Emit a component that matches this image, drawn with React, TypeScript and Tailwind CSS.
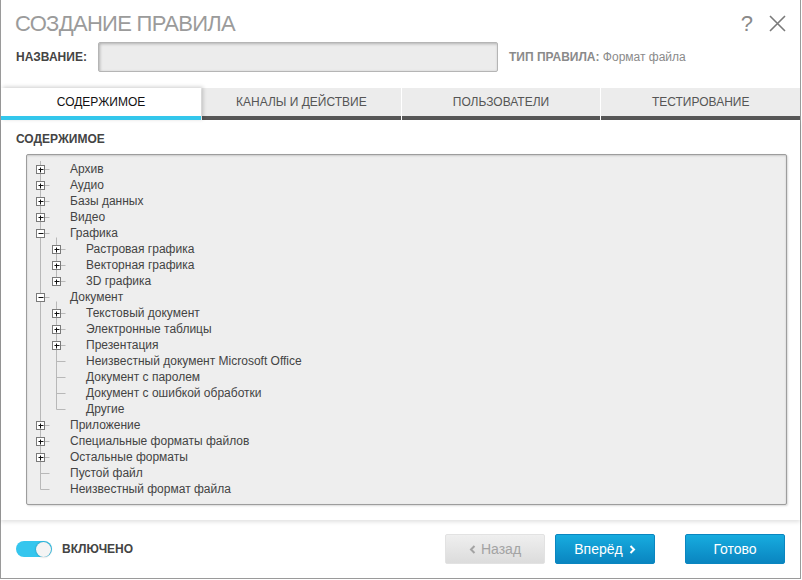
import React from "react";

type Node = { label: string; children?: Node[]; collapsed?: boolean };

const TREE: Node[] = [
  { label: "Архив", collapsed: true },
  { label: "Аудио", collapsed: true },
  { label: "Базы данных", collapsed: true },
  { label: "Видео", collapsed: true },
  {
    label: "Графика",
    children: [
      { label: "Растровая графика", collapsed: true },
      { label: "Векторная графика", collapsed: true },
      { label: "3D графика", collapsed: true },
    ],
  },
  {
    label: "Документ",
    children: [
      { label: "Текстовый документ", collapsed: true },
      { label: "Электронные таблицы", collapsed: true },
      { label: "Презентация", collapsed: true },
      { label: "Неизвестный документ Microsoft Office" },
      { label: "Документ с паролем" },
      { label: "Документ с ошибкой обработки" },
      { label: "Другие" },
    ],
  },
  { label: "Приложение", collapsed: true },
  { label: "Специальные форматы файлов", collapsed: true },
  { label: "Остальные форматы", collapsed: true },
  { label: "Пустой файл" },
  { label: "Неизвестный формат файла" },
];

type Row = {
  label: string;
  level: number;
  last: boolean;
  box: "plus" | "minus" | null;
  // for each ancestor level: does its line continue
  trail: boolean[];
};

function flatten(nodes: Node[], level: number, trail: boolean[], out: Row[]) {
  nodes.forEach((n, i) => {
    const last = i === nodes.length - 1;
    const box = n.collapsed ? "plus" : n.children ? "minus" : null;
    out.push({ label: n.label, level, last, box, trail });
    if (n.children) flatten(n.children, level + 1, [...trail, !last], out);
  });
  return out;
}

const ROWS = flatten(TREE, 0, [], []);
const LINE = "#b8b8b8";

function Gutter({ row }: { row: Row }) {
  const w = 43 + row.level * 16;
  const cx = 13.5 + row.level * 16;
  const cy = 8.5;
  return (
    <svg width={w} height={16} className="shrink-0">
      {row.trail.map((cont, a) =>
        cont ? <line key={a} x1={13.5 + a * 16} y1={0} x2={13.5 + a * 16} y2={16} stroke={LINE} /> : null
      )}
      <line x1={cx} y1={0} x2={cx} y2={row.last ? cy : 16} stroke={LINE} />
      <line x1={cx} y1={cy} x2={cx + 9} y2={cy} stroke={LINE} />
      {row.box === "minus" && <line x1={cx + 16} y1={cy + 4} x2={cx + 16} y2={16} stroke={LINE} />}
      {row.box && (
        <g>
          <rect x={cx - 4} y={cy - 4} width={8} height={8} fill="#fff" stroke="#7a7a7a" />
          <line x1={cx - 2} y1={cy} x2={cx + 3} y2={cy} stroke="#111" />
          {row.box === "plus" && <line x1={cx} y1={cy - 2} x2={cx} y2={cy + 3} stroke="#111" />}
        </g>
      )}
    </svg>
  );
}

const TABS = ["СОДЕРЖИМОЕ", "КАНАЛЫ И ДЕЙСТВИЕ", "ПОЛЬЗОВАТЕЛИ", "ТЕСТИРОВАНИЕ"];

export default function App() {
  return (
    <div className="w-[802px] h-[580px] bg-white overflow-hidden font-['Liberation_Sans',Arial,sans-serif]">
      <div className="w-[801px] h-[579px] flex flex-col border-l border-r border-b border-[#9a9a9a] bg-white">
        {/* Header */}
        <div className="flex items-center justify-between h-[42px] pl-[14px] pr-[14px] pt-[5px]">
          <h1 className="text-[22px] leading-[26px] text-[#9b9b9b] tracking-[-0.7px]">СОЗДАНИЕ ПРАВИЛА</h1>
          <div className="flex items-center gap-[16px]">
            <span className="text-[22px] leading-[24px] text-[#8a8a8a] font-light">?</span>
            <svg width="17" height="17" viewBox="0 0 17 17">
              <path d="M1 1L16 16M16 1L1 16" stroke="#7a7a7a" strokeWidth="1.6" />
            </svg>
          </div>
        </div>

        <div className="flex items-center h-[30px] pl-[15px]">
          <span className="w-[82px] text-[12px] font-bold text-[#444]">НАЗВАНИЕ:</span>
          <div className="w-[400px] h-[30px] bg-[#ececec] border border-[#b5b5b5] rounded-[2px] shadow-[inset_1px_1px_3px_rgba(0,0,0,0.25)]" />
          <span className="ml-[11px] text-[12px] text-[#8a8a8a]">
            <b>ТИП ПРАВИЛА:</b> Формат файла
          </span>
        </div>

        {/* Tabs */}
        <div className="flex gap-[1px] mt-[16px] h-[32px]">
          {TABS.map((t, i) =>
            i === 0 ? (
              <div
                key={t}
                className="relative z-10 w-[200px] flex items-center justify-center bg-white border-b-4 border-[#33c7ec] text-[12px] text-[#111] shadow-[2px_-1px_4px_rgba(0,0,0,0.2)]"
              >
                {t}
              </div>
            ) : (
              <div
                key={t}
                className="flex-1 flex items-center justify-center bg-[#ececec] border-b-4 border-[#575757] text-[12px] text-[#555]"
              >
                {t}
              </div>
            )
          )}
        </div>

        {/* Body */}
        <div className="flex flex-col h-[400px] pl-[15px] pr-[13px] pt-[11px] shadow-[0_2px_4px_rgba(0,0,0,0.12)] relative">
          <div className="text-[12px] leading-[16px] font-bold text-[#444]">СОДЕРЖИМОЕ</div>
          <div className="ml-[10px] mt-[7px] h-[351px] bg-[#eeeeee] border border-[#9d9d9d] rounded-[2px] shadow-[inset_0_1px_2px_rgba(0,0,0,0.15),1px_1px_2px_rgba(0,0,0,0.15)] pt-[6px]">
            {ROWS.map((r, i) => (
              <div key={i} className="flex h-[16px] items-center">
                <Gutter row={r} />
                <span className="text-[12px] leading-[16px] text-[#444] whitespace-nowrap">{r.label}</span>
              </div>
            ))}
          </div>
        </div>

        {/* Footer */}
        <div className="flex-1 flex items-center pl-[15px] pr-[15px]">
          <div className="flex items-center gap-[10px]">
            <div className="w-[36px] h-[16px] rounded-full bg-[#35c6ee] flex items-center justify-end pr-[1px]">
              <div className="w-[15px] h-[15px] rounded-full bg-[#f4f4f4] shadow-[0_0_2px_rgba(0,0,0,0.35)]" />
            </div>
            <span className="text-[12px] font-bold text-[#444]">ВКЛЮЧЕНО</span>
          </div>
          <div className="ml-auto flex items-center">
            <button className="w-[100px] h-[30px] flex items-center justify-center gap-[5px] rounded-[2px] bg-gradient-to-b from-[#efefef] to-[#dcdcdc] border border-[#e2e2e2] text-[14px] text-[#a3a3a3]">
              <svg width="7" height="9" viewBox="0 0 7 9">
                <path d="M5.5 1L2 4.5L5.5 8" stroke="#a3a3a3" strokeWidth="2" fill="none" />
              </svg>
              Назад
            </button>
            <button className="ml-[10px] w-[100px] h-[30px] flex items-center justify-center gap-[6px] rounded-[2px] bg-gradient-to-b from-[#17acdf] to-[#0a85c0] border border-[#0a86c0] text-[14px] text-white">
              Вперёд
              <svg width="7" height="9" viewBox="0 0 7 9">
                <path d="M1.5 1L5 4.5L1.5 8" stroke="#fff" strokeWidth="2" fill="none" />
              </svg>
            </button>
            <button className="ml-[30px] w-[100px] h-[30px] flex items-center justify-center rounded-[2px] bg-gradient-to-b from-[#17acdf] to-[#0a85c0] border border-[#0a86c0] text-[14px] text-white">
              Готово
            </button>
          </div>
        </div>
      </div>
    </div>
  );
}
